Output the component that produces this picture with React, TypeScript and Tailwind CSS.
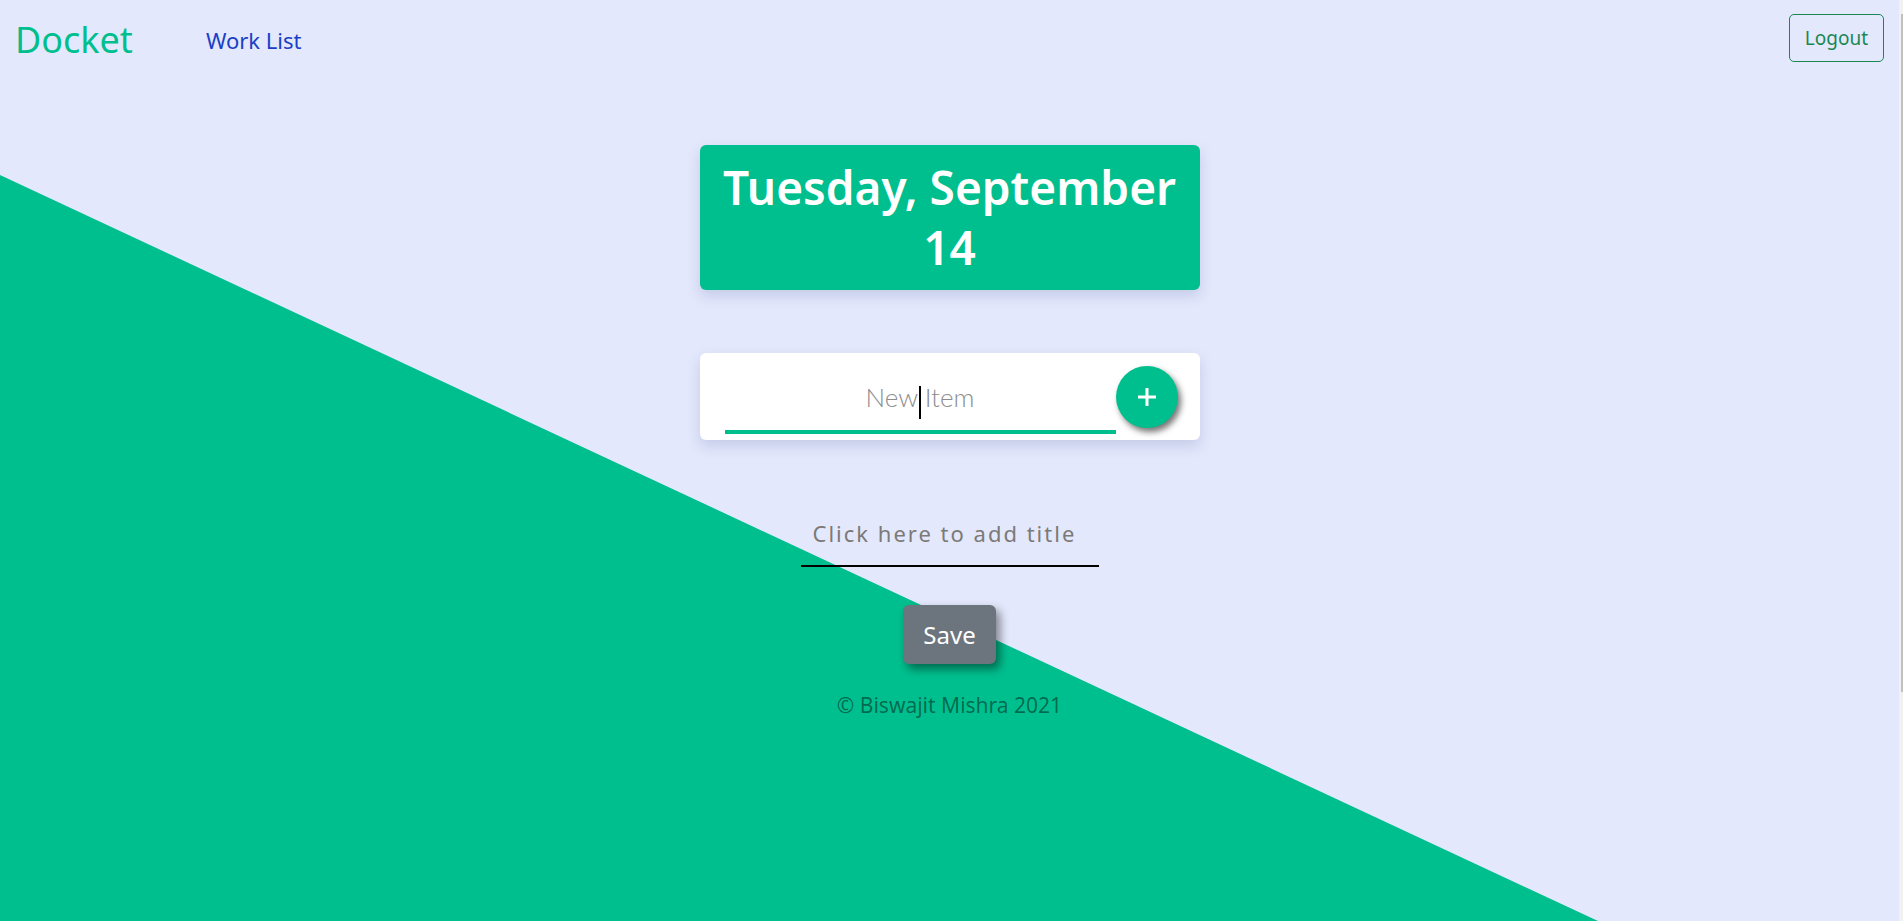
import { useState } from 'react'

export default function App() {
  const [item, setItem] = useState('')
  const [title, setTitle] = useState('')

  return (
    <div className="flex h-[921px] w-full overflow-hidden bg-[#e3e8fc] font-['Noto_Sans',sans-serif]">
      <div className="relative flex-1">
        {/* green diagonal backdrop */}
        <div className="absolute inset-0 bg-[#00bf8e] [clip-path:polygon(0_175px,1598px_921px,0_921px)]"></div>

        <div className="relative flex flex-col">
          {/* Navbar */}
          <nav className="flex h-[76px] items-center justify-between pl-[15px] pr-[15px]">
            <div className="flex items-center pt-[4px]">
              <a href="#" className="text-[36px] leading-none text-[#00bf8e]">
                Docket
              </a>
              <a href="#" className="ml-[73px] text-[22px] text-[#1a3fc6]">
                Work List
              </a>
            </div>
            <button className="h-[48px] rounded-[5px] border border-[#198754] px-[15px] text-[19px] text-[#198754]">
              Logout
            </button>
          </nav>

          {/* Date heading */}
          <div className="mx-auto mt-[69px] w-[500px] rounded-md bg-[#00bf8e] pb-[13px] pt-[12px] text-center shadow-[0_6px_14px_rgba(60,70,140,0.18)]">
            <h1 className="text-[46px] font-semibold leading-[60px] text-white">
              Tuesday, September 14
            </h1>
          </div>

          {/* New item card */}
          <form
            className="mx-auto mt-[63px] flex h-[87px] w-[500px] items-center rounded-md bg-white pl-[25px] pr-[22px] shadow-[0_6px_14px_rgba(60,70,140,0.18)]"
            onSubmit={(e) => e.preventDefault()}
          >
            <div className="relative mt-[27px] w-[391px] self-start">
              <input
                value={item}
                onChange={(e) => setItem(e.target.value)}
                placeholder="New Item"
                className="h-[54px] w-full border-b-4 border-[#00bf8e] bg-transparent pb-[16px] text-center font-['Lato',sans-serif] text-[26px] font-light text-gray-700 outline-none placeholder:text-[#8d8d8d]"
              />
              <span className="absolute left-[194px] top-[6px] h-[33px] w-[2px] bg-black"></span>
            </div>
            <button
              type="submit"
              className="flex h-[62px] w-[62px] items-center justify-center rounded-full bg-[#00bf8e] shadow-[3px_4px_6px_rgba(0,0,0,0.55)]"
            >
              <svg width="22" height="22" viewBox="0 0 22 22">
                <path d="M11 2v18M2 11h18" stroke="white" strokeWidth="3" />
              </svg>
            </button>
          </form>

          {/* Title input */}
          <input
            value={title}
            onChange={(e) => setTitle(e.target.value)}
            placeholder="Click here to add title"
            className="mx-auto mt-[70px] h-[57px] w-[298px] border-b-2 border-black bg-transparent px-[12px] pb-[10px] text-[22px] tracking-[2px] outline-none placeholder:text-[#7c7a78]"
          />

          <button className="mx-auto mt-[38px] h-[59px] w-[93px] rounded-md bg-[#6c757d] text-[24px] text-white shadow-[4px_5px_10px_rgba(0,0,0,0.45)]">
            Save
          </button>

          <p className="mt-[26px] text-center text-[21px] text-black/45">
            © Biswajit Mishra 2021
          </p>
        </div>
      </div>

      {/* scrollbar */}
      <div className="flex w-[4px] justify-end bg-[#f1f1f1] pt-[14px]">
        <div className="h-[678px] w-[2px] bg-[#c1c1c1]"></div>
      </div>
    </div>
  )
}
